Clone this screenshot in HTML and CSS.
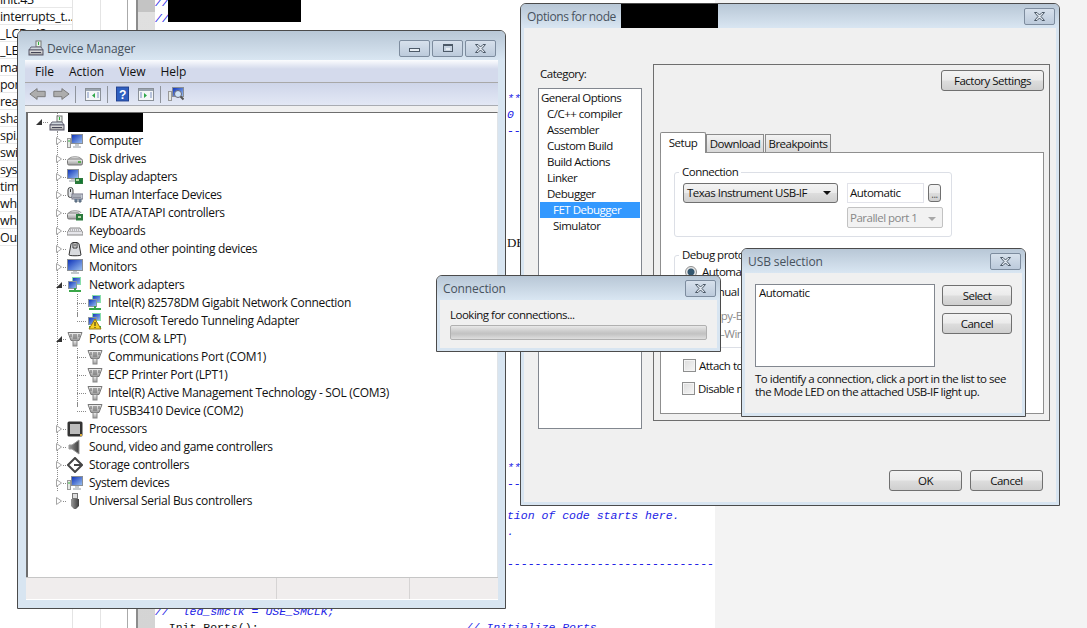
FILE: index.html
```html
<!DOCTYPE html>
<html lang="en">
<head>
    <meta charset="UTF-8">
    <title>Device Manager</title>
    <link rel="stylesheet" href="styles.css">
</head>
<body>
    <!-- shared icons -->
    <svg class="icon-defs" xmlns="http://www.w3.org/2000/svg">
        <defs>
            <linearGradient id="screen" x1="0" y1="0" x2="1" y2="1"><stop offset="0" stop-color="#0a2fb8"/><stop offset="1" stop-color="#9fc4f2"/></linearGradient>
            <linearGradient id="metal" x1="0" y1="0" x2="0" y2="1"><stop offset="0" stop-color="#f2f2f2"/><stop offset="1" stop-color="#9a9a9a"/></linearGradient>
            <linearGradient id="dark" x1="0" y1="0" x2="1" y2="0"><stop offset="0" stop-color="#9a9a9a"/><stop offset="1" stop-color="#3c3c3c"/></linearGradient>
            <symbol id="i-host" viewBox="0 0 16 16"><rect x="8" y="1" width="5" height="6" fill="#e8f2e8" stroke="#777"/><rect x="10" y="2" width="1" height="3" fill="#2fae3c"/><path d="M3 7h10l2 3H1z" fill="#cfd6dc" stroke="#667"/><rect x="1" y="10" width="14" height="5" fill="url(#metal)" stroke="#556"/><rect x="3" y="12" width="10" height="1" fill="#445"/></symbol>
            <symbol id="i-computer" viewBox="0 0 16 16"><rect x="0.5" y="5.5" width="3" height="9" fill="#e4e8e4" stroke="#999"/><rect x="1.5" y="7" width="1" height="2" fill="#35b040"/><rect x="4.5" y="1.5" width="11" height="9" fill="url(#screen)" stroke="#8a8f95"/><path d="M8 11h4v2h2v2H6v-2h2z" fill="#c8ccd0"/></symbol>
            <symbol id="i-disk" viewBox="0 0 16 16"><path d="M2 8c0-3 12-3 12 0" fill="#e6e6e6" stroke="#999"/><rect x="0.5" y="8" width="15" height="6" rx="1.5" fill="url(#metal)" stroke="#777"/><rect x="11" y="10" width="3" height="2" fill="#58b050"/></symbol>
            <symbol id="i-display" viewBox="0 0 16 16"><rect x="0.5" y="0.5" width="11" height="9" fill="url(#screen)" stroke="#8a8f95"/><path d="M4 10h4v1h2v2H2v-2h2z" fill="#c8ccd0"/><rect x="8" y="9" width="8" height="6" fill="#2b7a3c"/><rect x="9" y="10" width="3" height="2" fill="#b9d8a8"/><rect x="13" y="11" width="2" height="3" fill="#173"/></symbol>
            <symbol id="i-hid" viewBox="0 0 16 16"><rect x="1" y="0.5" width="5" height="10" rx="2.4" fill="#dfe2e6" stroke="#444"/><rect x="3" y="2" width="1" height="3" fill="#333"/><rect x="5" y="7" width="11" height="5" fill="#c6ccd4" stroke="#778"/><path d="M6.500 9h8M6.500 10.500h8" stroke="#556" stroke-dasharray="1 1"/><path d="M8 12v3h2v-3M12 12v3h2v-3" fill="#7288aa" stroke="#567"/></symbol>
            <symbol id="i-ide" viewBox="0 0 16 16"><path d="M2 8c0-3 12-3 12 0" fill="#e6e6e6" stroke="#999"/><rect x="0.5" y="8" width="12" height="6" rx="1.500" fill="url(#metal)" stroke="#777"/><rect x="9" y="9" width="7" height="6.500" fill="#2b7a3c"/><rect x="11" y="11" width="3" height="2" fill="#b9d8a8"/></symbol>
            <symbol id="i-keyboard" viewBox="0 0 16 16"><path d="M3 5h10l3 5v2H0v-2z" fill="#e6e6ea" stroke="#888"/><path d="M3 7h10M2.500 8.500h11" stroke="#888" stroke-dasharray="1 1"/></symbol>
            <symbol id="i-mouse" viewBox="0 0 16 16"><path d="M4 3c0-2 8-2 8 0l2 11c0 1-12 1-12 0z" fill="#d8dade" stroke="#333"/><path d="M6 1.500h4v5.500H6z" fill="#f4f4f4" stroke="#333"/><rect x="7.500" y="2.500" width="1" height="3" fill="#222"/></symbol>
            <symbol id="i-monitor" viewBox="0 0 16 16"><rect x="0.500" y="0.500" width="15" height="11" fill="url(#screen)" stroke="#8a8f95"/><path d="M6 12h4v1h2v2H4v-2h2z" fill="#c4c8cc"/></symbol>
            <symbol id="i-network" viewBox="0 0 16 16"><rect x="5.500" y="0.500" width="8" height="7" fill="url(#screen)" stroke="#8da"/><rect x="1.500" y="4.500" width="8" height="7" fill="url(#screen)" stroke="#8a95a0"/><rect x="2" y="13" width="12" height="2" fill="#3aa648"/><rect x="7" y="11" width="2" height="3" fill="#3aa648"/></symbol>
            <symbol id="i-warn" viewBox="0 0 16 16"><path d="M8 5l6 10H2z" fill="#f6d021" stroke="#9a7a10"/><rect x="7.500" y="8" width="1" height="4" fill="#222"/><rect x="7.500" y="13" width="1" height="1" fill="#222"/></symbol>
            <symbol id="i-port" viewBox="0 0 16 16"><path d="M1 1.500h14l-3 8H4z" fill="url(#metal)" stroke="#777"/><path d="M4 3v3M7 3v5M9 3v5M12 3v3" stroke="#666"/><rect x="6" y="9.500" width="4" height="5.500" fill="url(#metal)" stroke="#888"/></symbol>
            <symbol id="i-cpu" viewBox="0 0 16 16"><rect x="0.500" y="0.500" width="15" height="15" rx="1.500" fill="#333"/><rect x="3" y="3" width="10" height="10" fill="#bdbdbd"/><rect x="13" y="13" width="2" height="2" fill="#d8a838"/></symbol>
            <symbol id="i-sound" viewBox="0 0 16 16"><path d="M2 6h3l7-5v14l-7-5H2z" fill="url(#dark)" stroke="#999"/></symbol>
            <symbol id="i-storage" viewBox="0 0 16 16"><path d="M8 1l7 7-7 7-7-7z" fill="#fff" stroke="#444" stroke-width="2"/><path d="M7 8h8" stroke="#444" stroke-width="2"/></symbol>
            <symbol id="i-usb" viewBox="0 0 16 16"><rect x="5.500" y="0.500" width="5" height="5" fill="#ddd" stroke="#777"/><path d="M4 6h8v7l-3 3H7l-3-3z" fill="url(#dark)"/></symbol>
            <symbol id="i-close" viewBox="0 0 15 11"><path d="M2.500 1.500h2.500l2.500 2.500 2.500-2.500h2.500L9 5.500l3.500 4H10L7.500 7 5 9.500H2.500L6 5.500z" fill="#dfe6ee" stroke="#4d5a68"/></symbol>
        </defs>
    </svg>

    <!-- stuff behind the windows -->
    <div class="backdrop">
        <div class="file-list">
            <div class="file">init.43</div>
            <div class="file">interrupts_t...</div>
            <div class="file">_LCD_43</div>
            <div class="file">_LED</div>
            <div class="file">main</div>
            <div class="file">port</div>
            <div class="file">read</div>
            <div class="file">sharp</div>
            <div class="file">spi.</div>
            <div class="file">switch</div>
            <div class="file">sys</div>
            <div class="file">timer</div>
            <div class="file">wheel</div>
            <div class="file">wheel</div>
            <div class="file">Output</div>
            <div class="file-rest"></div>
        </div>
        <div class="splitter"></div>
        <div class="gutter"></div>
        <pre class="code">//
//
       //                    |                  10
 
 
 
                                                   **
                                                   0
                                                   --
 
 
 
 
 
 
                                                   <span class="serif">DE</span>
 
 
 
 
 
 
 
 
 
 
 
 
 
                                                   **
                                                   --
 
                                                   tion of code starts here.
                                                   .
 
                                                   ---------------------------------
 
 
//  led_smclk = USE_SMCLK;
  <span class="plain">Init_Ports();</span>                              // Initialize Ports</pre>
        <div class="rest"></div>
        <div class="redact redact-code"></div>
    </div>

    <!-- Device Manager -->
    <div class="win win-devmgr">
        <div class="titlebar">
            <svg class="title-icon"><use href="#i-host"/></svg>
            <span class="title-text">Device Manager</span>
            <div class="win-buttons">
                <button class="cap-btn"><span class="min-glyph"></span></button>
                <button class="cap-btn"><span class="max-glyph"></span></button>
                <button class="cap-btn"><svg class="close-glyph"><use href="#i-close"/></svg></button>
            </div>
        </div>
        <div class="client">
            <div class="menubar">
                <span>File</span><span>Action</span><span>View</span><span>Help</span>
            </div>
            <div class="toolbar">
                <svg class="tb-icon" viewBox="0 0 20 16"><path d="M1 8l8-6v3h9v6H9v3z" fill="#adadad" stroke="#757575"/></svg>
                <svg class="tb-icon tb-next" viewBox="0 0 20 16"><path d="M19 8l-8-6v3H2v6h9v3z" fill="#adadad" stroke="#757575"/></svg>
                <span class="tb-sep"></span>
                <svg class="tb-icon tb-pane" viewBox="0 0 18 16"><rect x="1.500" y="2.500" width="15" height="12" fill="#f4f6f8" stroke="#8a9098"/><rect x="2" y="3" width="14" height="2" fill="#9aa4b0"/><path d="M11 7l-3 2.500 3 2.500z" fill="#2fa84a"/><path d="M3 7h2M3 9h2M3 11h2M13 7h2M13 9h2M13 11h2" stroke="#7a90c0"/></svg>
                <span class="tb-sep"></span>
                <svg class="tb-icon tb-help" viewBox="0 0 14 16"><rect x="0.500" y="0.500" width="13" height="15" fill="#2f5fc0" stroke="#1c3c8c"/><text x="7" y="13" text-anchor="middle" font-family="Liberation Sans, sans-serif" font-weight="700" font-size="13" fill="#fff">?</text></svg>
                <svg class="tb-icon tb-pane2" viewBox="0 0 18 16"><rect x="1.500" y="2.500" width="15" height="12" fill="#f4f6f8" stroke="#8a9098"/><rect x="2" y="3" width="14" height="2" fill="#9aa4b0"/><path d="M7 7l3 2.500-3 2.500z" fill="#2fa84a"/><path d="M3 7h2M3 9h2M3 11h2M13 7h2M13 9h2M13 11h2" stroke="#7a90c0"/></svg>
                <span class="tb-sep"></span>
                <svg class="tb-icon tb-scan" viewBox="0 0 16 16"><rect x="0.500" y="5.500" width="3" height="9" fill="#e4e8e4" stroke="#999"/><rect x="4.500" y="1.500" width="11" height="9" fill="url(#screen)" stroke="#8a8f95"/><circle cx="10" cy="8" r="3.500" fill="#cfe4f8" stroke="#667"/><path d="M12.500 10.500l3 3" stroke="#555" stroke-width="2"/></svg>
            </div>
            <div class="toolbar-gap"></div>
            <div class="tree">
                <div class="row row-root">
                    <svg class="twisty"><path d="M6 1v6H0z" fill="#333"/></svg>
                    <span class="dots"></span>
                    <svg class="icon"><use href="#i-host"/></svg>
                    <span class="redact redact-host"></span>
                </div>
                <div class="row"><svg class="twisty"><path d="M.5.500l5 3.500-5 3.500z" fill="#fff" stroke="#a6a6a6"/></svg><span class="dots"></span><svg class="icon"><use href="#i-computer"/></svg><span class="label">Computer</span></div>
                <div class="row"><svg class="twisty"><path d="M.5.500l5 3.500-5 3.500z" fill="#fff" stroke="#a6a6a6"/></svg><span class="dots"></span><svg class="icon"><use href="#i-disk"/></svg><span class="label">Disk drives</span></div>
                <div class="row"><svg class="twisty"><path d="M.5.500l5 3.500-5 3.500z" fill="#fff" stroke="#a6a6a6"/></svg><span class="dots"></span><svg class="icon"><use href="#i-display"/></svg><span class="label">Display adapters</span></div>
                <div class="row"><svg class="twisty"><path d="M.5.500l5 3.500-5 3.500z" fill="#fff" stroke="#a6a6a6"/></svg><span class="dots"></span><svg class="icon"><use href="#i-hid"/></svg><span class="label">Human Interface Devices</span></div>
                <div class="row"><svg class="twisty"><path d="M.5.500l5 3.500-5 3.500z" fill="#fff" stroke="#a6a6a6"/></svg><span class="dots"></span><svg class="icon"><use href="#i-ide"/></svg><span class="label">IDE ATA/ATAPI controllers</span></div>
                <div class="row"><svg class="twisty"><path d="M.5.500l5 3.500-5 3.500z" fill="#fff" stroke="#a6a6a6"/></svg><span class="dots"></span><svg class="icon"><use href="#i-keyboard"/></svg><span class="label">Keyboards</span></div>
                <div class="row"><svg class="twisty"><path d="M.5.500l5 3.500-5 3.500z" fill="#fff" stroke="#a6a6a6"/></svg><span class="dots"></span><svg class="icon"><use href="#i-mouse"/></svg><span class="label">Mice and other pointing devices</span></div>
                <div class="row"><svg class="twisty"><path d="M.5.500l5 3.500-5 3.500z" fill="#fff" stroke="#a6a6a6"/></svg><span class="dots"></span><svg class="icon"><use href="#i-monitor"/></svg><span class="label">Monitors</span></div>
                <div class="row"><svg class="twisty"><path d="M6 1v6H0z" fill="#333"/></svg><span class="dots"></span><svg class="icon"><use href="#i-network"/></svg><span class="label">Network adapters</span></div>
                <div class="row row-child"><span class="dots"></span><svg class="icon"><use href="#i-network"/></svg><span class="label">Intel(R) 82578DM Gigabit Network Connection</span></div>
                <div class="row row-child row-lastchild"><span class="dots"></span><span class="icon-stack"><svg class="icon"><use href="#i-network"/></svg><svg class="icon icon-over"><use href="#i-warn"/></svg></span><span class="label">Microsoft Teredo Tunneling Adapter</span></div>
                <div class="row"><svg class="twisty"><path d="M6 1v6H0z" fill="#333"/></svg><span class="dots"></span><svg class="icon"><use href="#i-port"/></svg><span class="label">Ports (COM &amp; LPT)</span></div>
                <div class="row row-child"><span class="dots"></span><svg class="icon"><use href="#i-port"/></svg><span class="label">Communications Port (COM1)</span></div>
                <div class="row row-child"><span class="dots"></span><svg class="icon"><use href="#i-port"/></svg><span class="label">ECP Printer Port (LPT1)</span></div>
                <div class="row row-child"><span class="dots"></span><svg class="icon"><use href="#i-port"/></svg><span class="label">Intel(R) Active Management Technology - SOL (COM3)</span></div>
                <div class="row row-child row-lastchild"><span class="dots"></span><svg class="icon"><use href="#i-port"/></svg><span class="label">TUSB3410 Device (COM2)</span></div>
                <div class="row"><svg class="twisty"><path d="M.5.500l5 3.500-5 3.500z" fill="#fff" stroke="#a6a6a6"/></svg><span class="dots"></span><svg class="icon"><use href="#i-cpu"/></svg><span class="label">Processors</span></div>
                <div class="row"><svg class="twisty"><path d="M.5.500l5 3.500-5 3.500z" fill="#fff" stroke="#a6a6a6"/></svg><span class="dots"></span><svg class="icon"><use href="#i-sound"/></svg><span class="label">Sound, video and game controllers</span></div>
                <div class="row"><svg class="twisty"><path d="M.5.500l5 3.500-5 3.500z" fill="#fff" stroke="#a6a6a6"/></svg><span class="dots"></span><svg class="icon"><use href="#i-storage"/></svg><span class="label">Storage controllers</span></div>
                <div class="row"><svg class="twisty"><path d="M.5.500l5 3.500-5 3.500z" fill="#fff" stroke="#a6a6a6"/></svg><span class="dots"></span><svg class="icon"><use href="#i-computer"/></svg><span class="label">System devices</span></div>
                <div class="row row-last"><svg class="twisty"><path d="M.5.500l5 3.500-5 3.500z" fill="#fff" stroke="#a6a6a6"/></svg><span class="dots"></span><svg class="icon"><use href="#i-usb"/></svg><span class="label">Universal Serial Bus controllers</span></div>
            </div>
            <div class="statusbar">
                <span class="status-a"></span><span class="status-b"></span><span class="status-c"></span>
            </div>
        </div>
    </div>

    <!-- Options for node -->
    <div class="win win-options">
        <div class="titlebar titlebar-small">
            <span class="title-text">Options for node</span>
            <span class="redact redact-title"></span>
            <div class="win-buttons">
                <button class="cap-btn"><svg class="close-glyph"><use href="#i-close"/></svg></button>
            </div>
        </div>
        <div class="client client-dialog opt-body">
            <div class="opt-main">
                <div class="opt-left">
                    <div class="cat-label">Category:</div>
                    <div class="cat-list">
                        <div class="cat">General Options</div>
                        <div class="cat cat-sub">C/C++ compiler</div>
                        <div class="cat cat-sub">Assembler</div>
                        <div class="cat cat-sub">Custom Build</div>
                        <div class="cat cat-sub">Build Actions</div>
                        <div class="cat cat-sub">Linker</div>
                        <div class="cat cat-sub">Debugger</div>
                        <div class="cat cat-sub2 cat-selected">FET Debugger</div>
                        <div class="cat cat-sub2">Simulator</div>
                    </div>
                </div>
                <div class="opt-panel">
                    <div class="factory-row"><button class="btn btn-factory">Factory Settings</button></div>
                    <div class="tabs">
                        <span class="tab tab-active">Setup</span>
                        <span class="tab tab-download">Download</span>
                        <span class="tab tab-break">Breakpoints</span>
                    </div>
                    <div class="tab-page">
                        <fieldset class="group group-conn">
                            <legend>Connection</legend>
                            <div class="conn-grid">
                                <div class="combo combo-usb">Texas Instrument USB-IF<i class="combo-arrow"></i></div>
                                <div class="conn-right">
                                    <div class="input-auto">Automatic</div>
                                    <button class="btn btn-dots">...</button>
                                </div>
                                <div class="combo-disabled">Parallel port 1<i class="combo-arrow combo-arrow-off"></i></div>
                            </div>
                        </fieldset>
                        <fieldset class="group group-debug">
                            <legend>Debug protocol</legend>
                            <div class="radio-row"><i class="radio radio-on"></i>Automatic selection</div>
                            <div class="radio-row radio-manual"><i class="radio"></i>Manual selection</div>
                            <div class="proto-off proto-spy">Spy-Bi-Wire</div>
                            <div class="proto-off">4-Wire JTAG</div>
                        </fieldset>
                        <div class="check-row check-attach"><i class="check"></i>Attach to running target</div>
                        <div class="check-row check-disable"><i class="check"></i>Disable memory cache</div>
                    </div>
                </div>
            </div>
            <div class="opt-footer">
                <button class="btn btn-foot">OK</button>
                <button class="btn btn-foot">Cancel</button>
            </div>
        </div>
    </div>

    <!-- Connection -->
    <div class="win win-conn">
        <div class="titlebar titlebar-small">
            <span class="title-text">Connection</span>
            <div class="win-buttons">
                <button class="cap-btn"><svg class="close-glyph"><use href="#i-close"/></svg></button>
            </div>
        </div>
        <div class="client client-dialog conn-body">
            <div class="conn-text">Looking for connections...</div>
            <div class="progress"></div>
        </div>
    </div>

    <!-- USB selection -->
    <div class="win win-usb">
        <div class="titlebar titlebar-small">
            <span class="title-text">USB selection</span>
            <div class="win-buttons">
                <button class="cap-btn"><svg class="close-glyph"><use href="#i-close"/></svg></button>
            </div>
        </div>
        <div class="client client-dialog usb-body">
            <div class="usb-top">
                <div class="usb-list">Automatic</div>
                <div class="usb-actions">
                    <button class="btn btn-usb">Select</button>
                    <button class="btn btn-usb">Cancel</button>
                </div>
            </div>
            <p class="usb-note">To identify a connection, click a port in the list to see the Mode LED on the attached USB-IF light up.</p>
        </div>
    </div>
</body>
</html>
```

FILE: styles.css
```css
* {
    margin: 0;
    padding: 0;
    box-sizing: border-box;
}

html, body {
    width: 100%;
    height: 100%;
    overflow: hidden;
    background: #ffffff;
    font-family: 'Open Sans', 'Noto Sans', sans-serif;
    font-size: 12px;
    letter-spacing: -0.32px;
    color: #111111;
}

.icon-defs {
    position: absolute;
    width: 0;
    height: 0;
}

.redact {
    display: block;
    background: #000000;
}

/* behind the windows */
.backdrop {
    position: absolute;
    top: 0;
    left: 0;
    width: 1087px;
    height: 628px;
    display: flex;
    overflow: hidden;
}

.file-list {
    width: 128px;
    flex: none;
    margin-top: -9px;
    border-right: 1px solid #aaaaaa;
    background-image: linear-gradient(90deg, transparent 72px, #e4e4e4 72px, #e4e4e4 73px, transparent 73px, transparent 100px, #e4e4e4 100px, #e4e4e4 101px, transparent 101px);
}

.file {
    height: 17px;
    line-height: 17px;
    font-size: 12.5px;
    letter-spacing: -0.3px;
    white-space: nowrap;
    overflow: hidden;
    border-bottom: 1px solid #e8e8e8;
    width: 72px;
}

.file-rest {
    height: 400px;
}

.splitter {
    width: 10px;
    flex: none;
    border-right: 2px solid #8c8c8c;
}

.gutter {
    width: 17px;
    flex: none;
    background: linear-gradient(#c4c4c4 0, #c4c4c4 12px, #e0e0e0 12px, #d4d4d4 100%);
}

.code {
    width: 560px;
    flex: none;
    margin-top: -5px;
    font-family: 'Liberation Mono', monospace;
    font-size: 11.5px;
    line-height: 16px;
    letter-spacing: 0;
    font-style: italic;
    color: #2323e6;
    overflow: hidden;
}

.code .plain {
    font-style: normal;
    color: #111111;
}

.code .serif {
    font-family: 'Liberation Serif', serif;
    font-size: 13px;
    font-style: normal;
    color: #111111;
}

.rest {
    flex: 1;
    background: #f3f3f3;
}

.redact-code {
    position: absolute;
    left: 168px;
    top: 0;
    width: 133px;
    height: 22px;
}

/* window frame */
.win {
    position: absolute;
    display: flex;
    flex-direction: column;
    background: #d8e5f1;
    border: 1px solid #4b4b4b;
    border-radius: 6px 6px 0 0;
}

.win-devmgr {
    left: 17px;
    top: 30px;
    width: 489px;
    height: 579px;
}

.win-options {
    left: 520px;
    top: 3px;
    width: 540px;
    height: 503px;
}

.win-conn {
    left: 436px;
    top: 275px;
    width: 285px;
    height: 77px;
}

.win-usb {
    left: 741px;
    top: 248px;
    width: 285px;
    height: 169px;
}

.titlebar {
    flex: none;
    height: 29px;
    display: flex;
    align-items: center;
    padding-left: 10px;
    border-radius: 5px 5px 0 0;
    background: linear-gradient(#b8c7d6, #d9e6f2);
}

.titlebar-small {
    height: 24px;
    padding-left: 6px;
}

.title-icon {
    width: 16px;
    height: 16px;
    margin-right: 3px;
    margin-top: 5px;
}

.title-text {
    color: #47525e;
    font-size: 12px;
    letter-spacing: -0.1px;
    margin-top: 5px;
}

.titlebar-small .title-text {
    margin-top: 0;
}

.win-options .title-text {
    letter-spacing: -0.4px;
}

.redact-title {
    width: 97px;
    height: 26px;
    margin-left: 5px;
    margin-top: 1px;
}

.win-buttons {
    margin-left: auto;
    display: flex;
    gap: 2px;
    padding-right: 9px;
    padding-top: 5px;
}

.titlebar-small .win-buttons {
    padding-right: 4px;
    padding-top: 0;
}

.cap-btn {
    width: 31px;
    height: 17px;
    border: 1px solid #7d8c9e;
    border-radius: 2px;
    background: linear-gradient(#d7e1ec, #bccadb);
    display: flex;
    align-items: center;
    justify-content: center;
}

.min-glyph {
    width: 11px;
    height: 4px;
    margin-top: 4px;
    background: #e8eef4;
    border: 1px solid #4d5a68;
}

.max-glyph {
    width: 10px;
    height: 8px;
    border: 1px solid #4d5a68;
    border-top-width: 2px;
    background: linear-gradient(#e8eef4, #e8eef4) center / 4px 2px no-repeat, #c6d2e0;
}

.close-glyph {
    width: 15px;
    height: 11px;
}

.client {
    flex: 1;
    display: flex;
    flex-direction: column;
    margin: 0 7px 8px 7px;
    min-height: 0;
}

.client-dialog {
    margin: 0 3px 3px 3px;
    background: #f0f0f0;
    font-size: 11.5px;
    letter-spacing: -0.5px;
}

/* Device Manager */
.menubar {
    flex: none;
    height: 23px;
    display: flex;
    align-items: center;
    padding-left: 10px;
    gap: 15px;
    border-bottom: 1px solid #a8a8a8;
    background: linear-gradient(#fbfcfe 0, #d4daec 9px, #d4daec 100%);
    font-size: 12px;
    letter-spacing: 0;
}

.menubar span {
    margin-top: 1px;
}

.toolbar {
    flex: none;
    height: 23px;
    display: flex;
    align-items: center;
    padding-left: 4px;
    border-bottom: 1px solid #a9acb2;
    background: linear-gradient(#ced5e9, #e3e8f5);
}

.tb-icon {
    width: 18px;
    height: 16px;
    flex: none;
}

.tb-next {
    margin-left: 5px;
}

.tb-sep {
    width: 1px;
    height: 17px;
    flex: none;
    margin-left: 5px;
    background: #8f949c;
}

.tb-pane {
    margin-left: 8px;
}

.tb-help {
    width: 13px;
    margin-left: 8px;
}

.tb-pane2 {
    margin-left: 8px;
}

.tb-scan {
    width: 16px;
    margin-left: 7px;
}

.toolbar-gap {
    flex: none;
    height: 6px;
    background: #f0f0f0;
}

.tree {
    flex: 1;
    margin-left: 1px;
    border-top: 1px solid #6e6e6e;
    border-left: 2px solid #6e6e6e;
    border-right: 1px solid #e0e4e8;
    background: #ffffff;
    font-size: 12px;
}

.row {
    height: 18px;
    display: flex;
    align-items: center;
    padding-left: 28px;
    white-space: nowrap;
    background-image: linear-gradient(#8a8a8a 50%, transparent 50%);
    background-size: 1px 2px;
    background-repeat: repeat-y;
    background-position: 29px 0;
}

.row-root {
    height: 19px;
    padding-left: 8px;
    background-position: 29px 18px;
}

.row-last {
    background-image: none;
}

.twisty {
    width: 7px;
    height: 9px;
    flex: none;
}

.dots {
    width: 4px;
    height: 1px;
    flex: none;
    background-image: linear-gradient(90deg, #8a8a8a 50%, transparent 50%);
    background-size: 2px 1px;
}

.row-root .dots {
    width: 6px;
}

.icon {
    width: 16px;
    height: 16px;
    flex: none;
}

.label {
    margin-left: 6px;
    margin-bottom: 2px;
}

.redact-host {
    width: 75px;
    height: 19px;
    margin-left: 3px;
}

.row-child {
    padding-left: 49px;
    background-image: linear-gradient(#8a8a8a 50%, transparent 50%), linear-gradient(#8a8a8a 50%, transparent 50%);
    background-size: 1px 2px, 1px 2px;
    background-repeat: repeat-y, repeat-y;
    background-position: 29px 0, 49px 0;
}

.row-lastchild {
    background-image: linear-gradient(#8a8a8a 50%, transparent 50%), linear-gradient(#8a8a8a 50%, transparent 50%);
    background-size: 1px 2px, 1px 9px;
    background-position: 29px 0, 49px 0;
    background-repeat: repeat-y, no-repeat;
}

.row-child .dots {
    width: 10px;
}

.row-child .label {
    margin-left: 5px;
}

.icon-stack {
    display: flex;
    position: relative;
}

.icon-over {
    position: absolute;
    left: 0;
    top: 1px;
}

.statusbar {
    flex: none;
    height: 23px;
    display: flex;
    margin-left: 1px;
    border-top: 1px solid #c6c6c6;
    border-bottom: 1px solid #ffffff;
    background: #f0eded;
}

.status-a {
    width: 251px;
    border-right: 1px solid #d6d4d4;
}

.status-b {
    width: 133px;
    border-right: 1px solid #d6d4d4;
}

.status-c {
    flex: 1;
}

/* Options for node */
.opt-body {
    padding: 36px 13px 0 14px;
}

.opt-main {
    display: flex;
    gap: 11px;
}

.opt-left {
    width: 104px;
    flex: none;
}

.cat-label {
    height: 16px;
    line-height: 16px;
    margin: 2px 0 6px 2px;
}

.cat-list {
    height: 341px;
    border: 1px solid #82878f;
    background: #ffffff;
    padding: 1px 1px 0 1px;
}

.cat {
    height: 16px;
    line-height: 16px;
    padding-left: 1px;
    white-space: nowrap;
}

.cat-sub {
    padding-left: 7px;
}

.cat-sub2 {
    padding-left: 13px;
}

.cat-selected {
    background: #3399ff;
    color: #ffffff;
}

.opt-panel {
    width: 397px;
    height: 357px;
    flex: none;
    border: 1px solid #6e6e6e;
    padding: 5px 5px 0 6px;
}

.factory-row {
    display: flex;
    justify-content: flex-end;
}

.btn {
    border: 1px solid #707070;
    border-radius: 3px;
    background: linear-gradient(#f3f3f3 0, #ebebeb 48%, #dddddd 52%, #cfcfcf 100%);
    font-family: inherit;
    font-size: inherit;
    letter-spacing: inherit;
    color: #111111;
    text-align: center;
}

.btn-factory {
    width: 103px;
    height: 21px;
}

.tabs {
    display: flex;
    align-items: flex-end;
    height: 21px;
    margin-top: 40px;
}

.tab {
    height: 18px;
    line-height: 17px;
    text-align: center;
    border: 1px solid #8b8b8b;
    border-bottom: none;
    background: linear-gradient(#f3f3f3, #d8d8d8);
}

.tab-active {
    width: 46px;
    height: 21px;
    line-height: 19px;
    background: #ffffff;
    position: relative;
    margin-bottom: -1px;
    z-index: 1;
    border-radius: 2px 2px 0 0;
}

.tab-download {
    width: 58px;
}

.tab-break {
    width: 66px;
    margin-left: 1px;
}

.tab-page {
    width: 384px;
    height: 262px;
    border: 1px solid #8f8f8f;
    background: #ffffff;
    padding: 11px 0 0 13px;
}

.group {
    display: block;
    border: 1px solid #dcdfe6;
    border-radius: 3px;
    padding: 0 0 0 8px;
}

.group legend {
    margin-left: -4px;
    padding: 0 3px;
    line-height: 16px;
}

.group-conn {
    width: 278px;
    height: 73px;
}

.conn-grid {
    display: grid;
    grid-template-columns: 155px 96px;
    column-gap: 9px;
    row-gap: 4px;
    padding-top: 3px;
}

.combo {
    position: relative;
    height: 20px;
    line-height: 18px;
    padding-left: 3px;
    border: 1px solid #707070;
    border-radius: 3px;
    background: linear-gradient(#f3f3f3 0, #ebebeb 48%, #dddddd 52%, #cfcfcf 100%);
}

.combo-arrow {
    position: absolute;
    right: 6px;
    top: 7px;
    width: 0;
    height: 0;
    border: 4px solid transparent;
    border-top: 4px solid #111111;
    border-bottom: none;
}

.combo-arrow-off {
    border-top-color: #a8a8a8;
    top: 9px;
}

.conn-right {
    display: flex;
    gap: 4px;
    align-items: center;
}

.input-auto {
    width: 77px;
    height: 20px;
    line-height: 18px;
    padding-left: 2px;
    border: 1px solid #e2e3ea;
}

.btn-dots {
    width: 13px;
    height: 18px;
    line-height: 18px;
    color: #555555;
    font-size: 10px;
}

.combo-disabled {
    position: relative;
    grid-column: 2;
    height: 21px;
    line-height: 19px;
    padding-left: 2px;
    border: 1px solid #c2c2c2;
    border-radius: 2px;
    background: #f2f2f2;
    color: #888888;
}

.group-debug {
    width: 350px;
    height: 101px;
    margin-top: 10px;
}

.radio-row {
    height: 18px;
    line-height: 18px;
    display: flex;
    align-items: center;
    white-space: nowrap;
    padding-left: 2px;
}

.radio-manual {
    margin-top: 2px;
}

.radio {
    width: 12px;
    height: 12px;
    flex: none;
    margin-right: 5px;
    border: 1px solid #8e8f8f;
    border-radius: 50%;
    background: #f2f2f2;
}

.radio-on {
    background: radial-gradient(circle, #33566e 0, #33566e 3px, #e6e6e6 4px);
}

.proto-off {
    height: 18px;
    line-height: 18px;
    padding-left: 32px;
    color: #8a8a8a;
    white-space: nowrap;
}

.proto-spy {
    margin-top: 6px;
}

.check-row {
    display: flex;
    align-items: center;
    height: 16px;
    padding-left: 9px;
    white-space: nowrap;
}

.check-attach {
    margin-top: 9px;
}

.check-disable {
    margin-top: 7px;
    padding-left: 8px;
}

.check {
    width: 13px;
    height: 13px;
    flex: none;
    margin-right: 3px;
    border: 1px solid #8e8f8f;
    background: linear-gradient(135deg, #dcdcdc, #f6f6f6);
    box-shadow: inset 0 0 0 1px #f4f4f4;
}

.opt-footer {
    display: flex;
    justify-content: flex-end;
    gap: 8px;
    margin-top: 41px;
}

.btn-foot {
    width: 73px;
    height: 21px;
}

/* Connection */
.conn-body {
    padding: 6px 10px 0 10px;
}

.conn-text {
    height: 18px;
    line-height: 18px;
}

.progress {
    height: 15px;
    margin-top: 1px;
    border: 1px solid #b0b0b0;
    border-radius: 2px;
    background: linear-gradient(#e8e8e8, #c9c9c9 45%, #c2c2c2 60%, #dedede);
}

/* USB selection */
.usb-body {
    padding: 11px 10px 0 10px;
}

.usb-top {
    display: flex;
    gap: 7px;
}

.usb-list {
    width: 180px;
    height: 83px;
    border: 1px solid #82878f;
    background: #ffffff;
    padding: 0 3px;
}

.usb-actions {
    display: flex;
    flex-direction: column;
    gap: 7px;
    padding-top: 1px;
}

.btn-usb {
    width: 70px;
    height: 21px;
}

.usb-note {
    margin-top: 5px;
    line-height: 13px;
}
```
